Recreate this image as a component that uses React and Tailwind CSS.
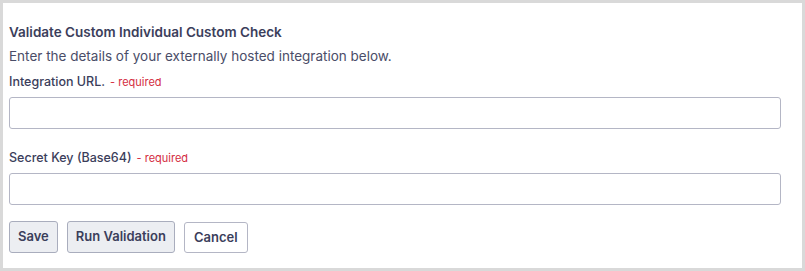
import React from 'react';

const Field = ({ label, className = '' }) => (
  <div className={className}>
    <div className="flex items-baseline gap-[5px] leading-5">
      <span className="text-[12.5px] font-medium text-[#3b3e5b]">{label}</span>
      <span className="text-[11px] text-[#d42c41]">- required</span>
    </div>
    <input
      type="text"
      className="mt-[5px] block h-8 w-full rounded-[3px] border border-[#b4b6c5] bg-white px-2 text-[13px] outline-none"
    />
  </div>
);

export default function App() {
  return (
    <div
      className="h-[271px] w-[805px] border-[3px] border-[#d9d9d9] bg-white pl-[6px] pr-[21px] pt-[19px] text-[#3b3e5b]"
      style={{ fontFamily: 'Inter, "Liberation Sans", sans-serif' }}
    >
      <h2 className="text-[13.5px] font-semibold leading-5">Validate Custom Individual Custom Check</h2>
      <p className="mt-1 text-[13.5px] leading-5 text-[#4a4d68]">
        Enter the details of your externally hosted integration below.
      </p>
      <Field label="Integration URL." className="mt-[6px]" />
      <Field label="Secret Key (Base64)" className="mt-[19px]" />
      <div className="mt-4 flex gap-[9px]">
        <button className="h-8 rounded-[3px] border border-[#a9adbd] bg-[#eceef2] px-[8px] text-[13px] font-semibold text-[#3b3e5b]">
          Save
        </button>
        <button className="h-8 rounded-[3px] border border-[#a9adbd] bg-[#eceef2] px-[8px] text-[13px] font-semibold text-[#3b3e5b]">
          Run Validation
        </button>
        <button className="mt-[1px] h-[31px] rounded-[3px] border border-[#b4b6c5] bg-white px-[9px] text-[13px] font-semibold text-[#3b3e5b]">
          Cancel
        </button>
      </div>
    </div>
  );
}
